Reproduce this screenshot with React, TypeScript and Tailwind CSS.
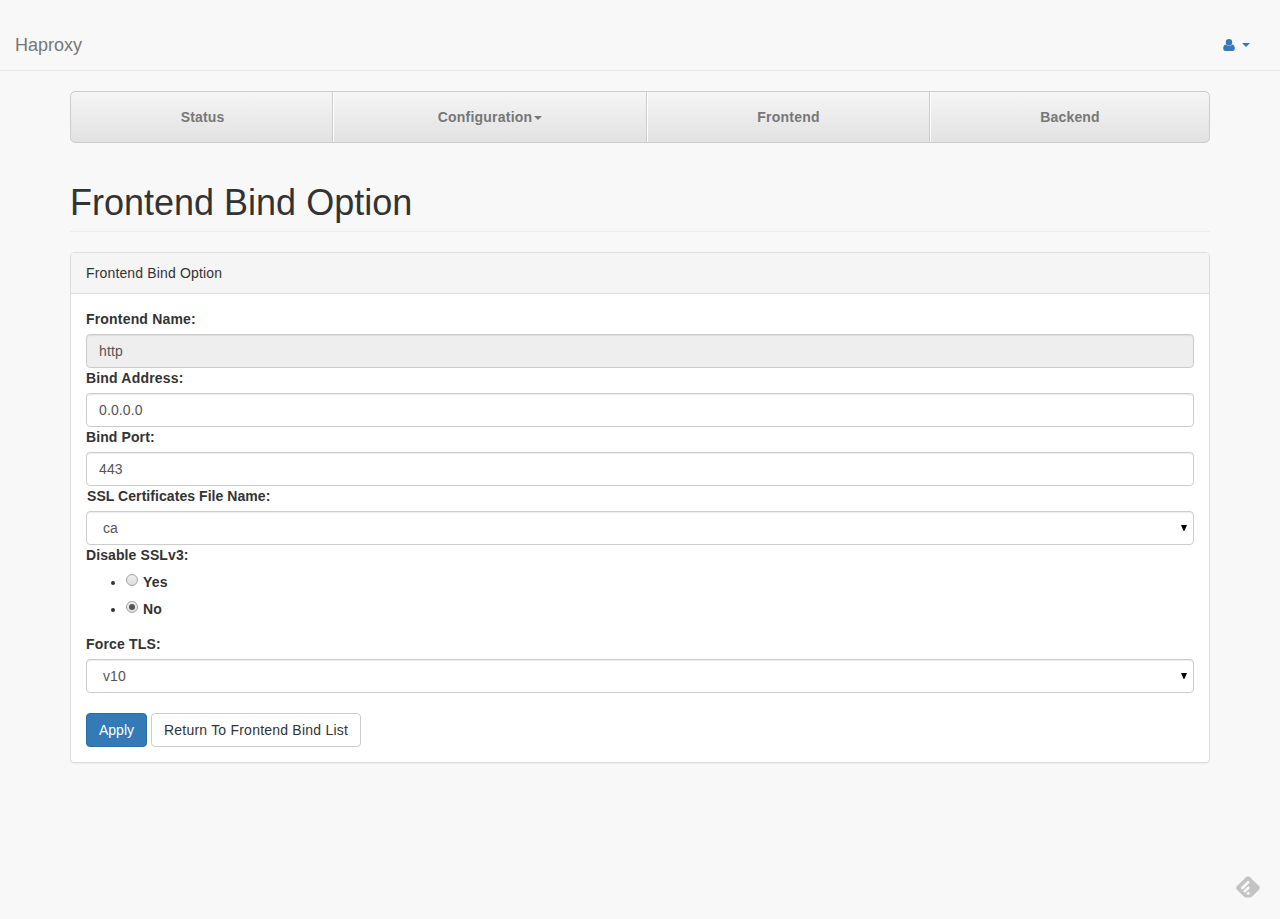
import React from "react";

const nav = [
  { label: "Status", width: "w-[262px]", text: "pl-[2px] tracking-[0.15px]" },
  { label: "Configuration", width: "w-[314px]", text: "tracking-[0.22px]", caret: true },
  { label: "Frontend", width: "w-[283px]", text: "tracking-[0.22px]" },
  { label: "Backend", width: "w-[279px]", text: "tracking-[0.18px]" },
];

const control =
  "flex h-[34px] w-full items-center rounded-[4px] border border-[#ccc] px-3 text-[14px] tracking-[0.12px] text-[#555] shadow-[inset_0_1px_1px_rgba(0,0,0,0.075)]";

function Label({ children, spacing = "tracking-[0.18px]" }: { children: React.ReactNode; spacing?: string }) {
  return <label className={`mb-[5px] block h-5 font-bold ${spacing}`}>{children}</label>;
}

function Caret({ className = "" }: { className?: string }) {
  return (
    <svg className={`h-1 w-2 ${className}`} viewBox="0 0 8 4">
      <path d="M0 0h8L4 4z" fill="currentColor" />
    </svg>
  );
}

function Select({ value }: { value: string }) {
  return (
    <div className={`${control} justify-between bg-white`}>
      <span className="pl-1">{value}</span>
      <svg className="-mr-[6px] h-[6px] w-[6px]" viewBox="0 0 6 6">
        <path d="M0 0h6L3.400 6h-.8z" fill="#000" />
      </svg>
    </div>
  );
}

function Radio({ label, checked }: { label: string; checked?: boolean }) {
  return (
    <li className="flex h-[27px] items-start">
      <span className="mt-[9px] mr-[11px] ml-[25px] h-[4px] w-[4px] rounded-full bg-[#333]" />
      <span className="mt-[2px] flex h-3 w-3 items-center justify-center rounded-full border border-[#a5a5a5] bg-linear-to-b from-[#eee] to-[#ddd]">
        {checked && <span className="h-[6px] w-[6px] rounded-full bg-[#555]" />}
      </span>
      <span className="ml-[5px] font-bold tracking-[0.25px]">{label}</span>
    </li>
  );
}

export default function App() {
  return (
    <div className="flex h-[919px] flex-col bg-[#f8f8f8] font-['Liberation_Sans',Arial,sans-serif] text-[14px] leading-5 text-[#333]">
      <header className="flex h-[71px] shrink-0 items-center justify-between border-b border-[#e7e7e7] px-[15px] pt-5 text-[#777]">
        <span className="text-[18px]">Haproxy</span>
        <span className="mr-[15px] flex items-center gap-[7px] text-[#337ab7]">
          <svg className="h-[12px] w-[12px]" viewBox="0 0 12 12" fill="currentColor">
            <circle cx="6" cy="3.200" r="3.200" />
            <path d="M2.700 5.400C.8 5.900.2 7.500.2 9.600.2 11 1.100 12 2.200 12h7.600c1.100 0 2-.9 2-2.400 0-2.100-.6-3.700-2.500-4.200A4.700 4.700 0 0 1 6 6.800a4.700 4.700 0 0 1-3.300-1.400Z" />
          </svg>
          <Caret />
        </span>
      </header>
      <main className="mx-auto w-[1140px] pt-5">
        <nav className="flex h-[52px] overflow-hidden rounded-[5px] border border-[#ccc] bg-linear-to-b from-[#f5f5f5] to-[#e2e2e2] font-bold text-[#777]">
          {nav.map((n, i) => (
            <a
              key={n.label}
              className={`${n.width} ${n.text} flex shrink-0 items-center justify-center gap-[2px] border-white ${i ? "border-l" : ""} ${i < 3 ? "border-r border-r-[#ccc]" : ""}`}
            >
              {n.label}
              {n.caret && <Caret className="mt-[2px]" />}
            </a>
          ))}
        </nav>
        <h1 className="mt-10 h-[49px] border-b border-[#eee] text-[36px] leading-[39px]">Frontend Bind Option</h1>
        <section className="mt-5 h-[511px] rounded-[4px] border border-[#ddd] bg-white shadow-[0_1px_1px_rgba(0,0,0,0.05)]">
          <div className="h-[41px] rounded-t-[3px] border-b border-[#ddd] bg-[#f5f5f5] px-[15px] py-[10px] tracking-[0.15px]">
            Frontend Bind Option
          </div>
          <div className="p-[15px]">
            <Label>Frontend Name:</Label>
            <div className={`${control} bg-[#eee]`}>http</div>
            <Label>Bind Address:</Label>
            <div className={`${control} bg-white`}>0.0.0.0</div>
            <Label spacing="tracking-[0.1px]">Bind Port:</Label>
            <div className={`${control} bg-white`}>443</div>
            <Label spacing="pl-px tracking-[0.06px]">SSL Certificates File Name:</Label>
            <Select value="ca" />
            <Label spacing="tracking-[0.1px]">Disable SSLv3:</Label>
            <ul className="mt-[7px] mb-[8px]">
              <Radio label="Yes" />
              <Radio label="No" checked />
            </ul>
            <Label>Force TLS:</Label>
            <Select value="v10" />
            <div className="mt-5 flex gap-1">
              <button className="h-[34px] w-[61px] rounded-[4px] border border-[#2e6da4] bg-[#337ab7] text-white">Apply</button>
              <button className="h-[34px] w-[210px] rounded-[4px] border border-[#ccc] bg-white tracking-[0.22px] whitespace-nowrap">
                Return To Frontend Bind List
              </button>
            </div>
          </div>
        </section>
      </main>
      <div className="mt-auto mr-5 mb-5 self-end">
        <svg className="h-6 w-6" viewBox="0 0 24 24">
          <path d="M10 2.200Q12 .3 14 2.200l9 8.700q1.800 1.900 0 3.800l-6.800 6.800Q15.200 22.500 13.800 22.500h-3.600q-1.400 0-2.400-1L1 14.700q-1.800-1.900 0-3.800z" fill="#c3c3c3" />
          <g stroke="#f8f8f8" strokeWidth="2.600" strokeLinecap="round">
            <path d="M6.200 13 12.200 7.200M8.700 16.200l3.700-3.500M12 18.500l.4-.4" />
          </g>
        </svg>
      </div>
    </div>
  );
}
